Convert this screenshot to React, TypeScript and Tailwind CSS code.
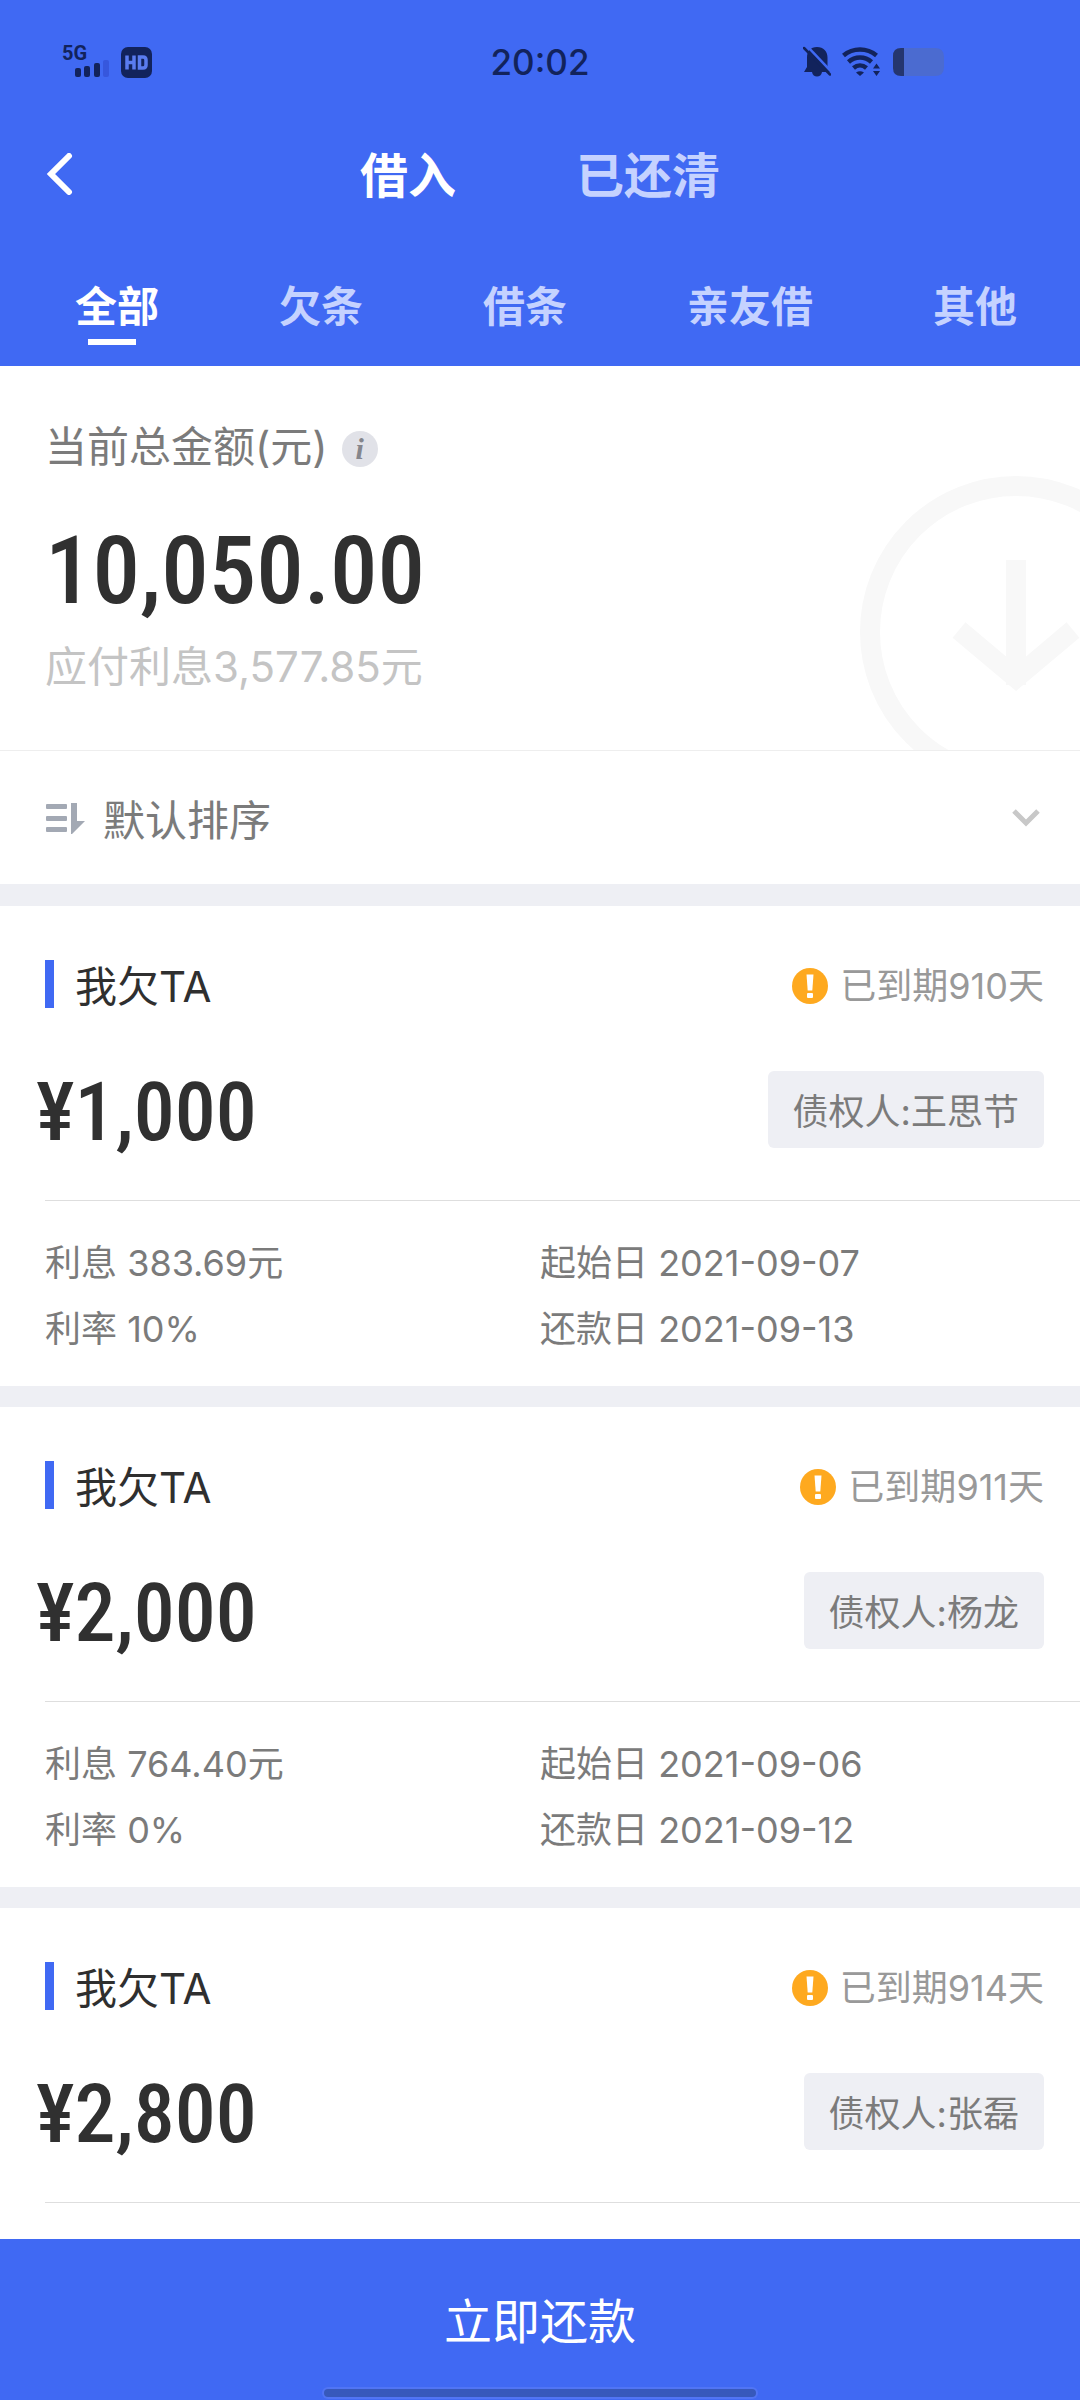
type Loan = {
  amount: string;
  overdueDays: number;
  creditor: string;
  interest?: string;
  rate?: string;
  start?: string;
  due?: string;
};

const LOANS: Loan[] = [
  {
    amount: "1,000",
    overdueDays: 910,
    creditor: "王思节",
    interest: "383.69元",
    rate: "10%",
    start: "2021-09-07",
    due: "2021-09-13",
  },
  {
    amount: "2,000",
    overdueDays: 911,
    creditor: "杨龙",
    interest: "764.40元",
    rate: "0%",
    start: "2021-09-06",
    due: "2021-09-12",
  },
  { amount: "2,800", overdueDays: 914, creditor: "张磊" },
];

const CATEGORIES = ["全部", "欠条", "借条", "亲友借", "其他"];

function SignalIcon() {
  return (
    <svg width="50" height="54" viewBox="0 -10 50 54" aria-hidden="true">
      <text x="0" y="15" fontSize="20" fontWeight="700" fill="#12235c" fontFamily="Roboto, sans-serif">
        5G
      </text>
      <g fill="#12235c">
        <rect x="13" y="23" width="6" height="9" rx="2" />
        <rect x="22" y="21" width="6" height="11" rx="2" />
        <rect x="32" y="18" width="6" height="14" rx="2" />
      </g>
      <rect x="41" y="15" width="6" height="17" rx="2" fill="#3657dd" />
    </svg>
  );
}

function HdIcon() {
  return (
    <svg width="31" height="31" viewBox="0 0 31 31" aria-hidden="true">
      <rect width="31" height="31" rx="7" fill="#12235c" />
      <path
        d="M6 8.500v14M13 8.500v14M6 15.500h7M18.500 10h3.500q3 0 3 3v5q0 3-3 3h-3.500z"
        fill="none"
        stroke="#5a7cf0"
        strokeWidth="3.500"
      />
    </svg>
  );
}

function BellOffIcon() {
  return (
    <svg width="28" height="32" viewBox="0 0 28 32" aria-hidden="true">
      <path
        d="M14 1c6.500 0 10.500 4.500 10.500 10.500V21l3 5H1l3-5v-9.500C4 5.500 7.500 1 14 1z"
        fill="#12235c"
      />
      <path d="M9 26h10c-.5 3-2.500 4.500-5 4.500S9.500 29 9 26z" fill="#12235c" />
      <path d="M4 0l25.500 27" stroke="#4069f3" strokeWidth="2.500" />
      <path d="M1 2l26 26.500" stroke="#12235c" strokeWidth="2.500" strokeLinecap="round" />
    </svg>
  );
}

function WifiIcon() {
  return (
    <svg width="40" height="30" viewBox="0 0 40 30" aria-hidden="true">
      <g fill="none" stroke="#12235c" strokeWidth="4.500">
        <path d="M1.500 8.500C11 .5 25 .5 34.500 8.500" />
        <path d="M6.500 15c6.500-6 16.500-6 23 0" />
        <path d="M11.500 21c4-3.500 9-3.500 13 0" />
      </g>
      <path d="M14 25.500q4-2.500 8 0L18 29z" fill="#12235c" />
      <path d="M31 21.500l3.500-5 3.500 5zM31 24h7l-3.500 5z" fill="#12235c" />
    </svg>
  );
}

function BatteryIcon() {
  return (
    <svg width="51" height="28" viewBox="0 0 51 28" aria-hidden="true">
      <path d="M11 0h31q9 0 9 9v10q0 9-9 9H11z" fill="#4b6bd0" />
      <path d="M11 0v28H8q-8 0-8-8V8q0-8 8-8z" fill="#25366f" />
    </svg>
  );
}

function SortIcon() {
  return (
    <svg width="40" height="34" viewBox="0 0 40 34" aria-hidden="true" fill="#a3a9b4">
      <rect x="1" y="3" width="21" height="5" rx="1" />
      <rect x="1" y="15" width="21" height="5" rx="1" />
      <rect x="1" y="26" width="21" height="5" rx="1" />
      <path d="M26 2h6v18h8L27 33h-1z" />
    </svg>
  );
}

function AlertIcon() {
  return (
    <svg width="36" height="36" viewBox="0 0 36 36" aria-hidden="true">
      <circle cx="18" cy="18" r="18" fill="#fea91f" />
      <path d="M14.500 6.500h7l-1.200 16h-4.600z" fill="#fff" />
      <rect x="15" y="25" width="6" height="5" rx="1" fill="#fff" />
    </svg>
  );
}

function Watermark() {
  return (
    <svg
      className="absolute right-0 bottom-0"
      width="220"
      height="275"
      viewBox="0 0 220 275"
      fill="none"
      stroke="#f8f8f8"
      strokeWidth="20"
      aria-hidden="true"
    >
      <circle cx="156" cy="157" r="146" />
      <path d="M156 85v125M99 155l57 48 57-48" />
    </svg>
  );
}

function LoanCard({ loan }: { loan: Loan }) {
  return (
    <article className="border-b-[21px] border-[#eeeff4] bg-white pt-[54px] last:border-b-0">
      <header className="flex h-12 items-center pr-9 pl-[45px]">
        <span className="h-12 w-[9px] bg-[#4069f3]" />
        <h2 className="ml-[21px] pt-1 text-[42px] text-[#2f2f2f]">我欠TA</h2>
        <p className="ml-auto flex items-center gap-3 pt-[3px] text-4xl text-[#999999]">
          <AlertIcon />
          已到期{loan.overdueDays}天
        </p>
      </header>
      <div className="mt-[63px] flex h-[77px] items-center justify-between px-9">
        <p className="pt-1 font-['Roboto_Condensed','Open_Sans_Condensed',sans-serif] text-[82px] leading-none font-medium text-[#303030]">
          ¥{loan.amount}
        </p>
        <button type="button" className="h-full rounded-md bg-[#eeeff4] px-[25px] pt-1 text-4xl text-[#7b7b7b]">
          债权人:{loan.creditor}
        </button>
      </div>
      <div className="mt-[52px] ml-[45px] border-t border-[#dedede]" />
      {loan.interest && (
        <div className="grid grid-cols-2 pt-[29px] pb-6 text-4xl leading-[66px] text-[#7b7b7b]">
          <p className="pl-[45px]">利息 {loan.interest}</p>
          <p>起始日 {loan.start}</p>
          <p className="pl-[45px]">利率 {loan.rate}</p>
          <p>还款日 {loan.due}</p>
        </div>
      )}
    </article>
  );
}

export default function App() {
  return (
    <div className="flex h-screen flex-col bg-white font-['Inter','Noto_Sans_CJK_SC',sans-serif]">
      <header className="shrink-0 bg-[#4069f3] text-white">
        <div className="grid h-[124px] grid-cols-[1fr_auto_1fr] items-center pr-[136px] pl-[62px]">
          <div className="flex items-center gap-[9px]">
            <SignalIcon />
            <HdIcon />
          </div>
          <time className="ml-[74px] text-[35px] font-medium text-[#12235c]">20:02</time>
          <div className="flex items-center justify-end gap-[11px]">
            <BellOffIcon />
            <WifiIcon />
            <BatteryIcon />
          </div>
        </div>
        <nav className="grid h-[104px] grid-cols-[1fr_auto_1fr] items-center">
          <button type="button" aria-label="返回" className="justify-self-start pb-1 pl-[46px]">
            <svg width="27" height="42" viewBox="0 0 27 42" fill="none" stroke="#fff" strokeWidth="6" aria-hidden="true">
              <path d="M23 3L5 21l18 18" strokeLinecap="round" />
            </svg>
          </button>
          <div className="flex gap-[120px] text-5xl font-bold">
            <button type="button">借入</button>
            <button type="button" className="text-[#c5d2ff]">
              已还清
            </button>
          </div>
        </nav>
        <nav className="flex h-[138px] items-start justify-between pt-[51px] pr-[63px] pl-[75px] text-[42px] leading-[56px] font-bold">
          {CATEGORIES.map((name, i) =>
            i === 0 ? (
              <button key={name} type="button" className="relative">
                {name}
                <span className="absolute -bottom-[10px] left-[13px] h-[6px] w-12 bg-white" />
              </button>
            ) : (
              <button key={name} type="button" className="text-[#c5d2ff]">
                {name}
              </button>
            ),
          )}
        </nav>
      </header>

      <main className="min-h-0 flex-1 overflow-hidden">
        <section className="relative border-b border-[#eeeeee] px-[45px] pt-[52px] pb-[54px]">
          <Watermark />
          <div className="flex items-center gap-[14px] text-[42px] leading-[58px] text-[#7b7b7b]">
            <h1>当前总金额(元)</h1>
            <button
              type="button"
              aria-label="说明"
              className="mt-1 flex size-9 items-center justify-center rounded-full bg-[#e1e2e8] font-['Liberation_Serif',serif] text-3xl leading-none font-bold text-[#85868c] italic"
            >
              i
            </button>
          </div>
          <p className="mt-10 font-['Roboto_Condensed','Open_Sans_Condensed',sans-serif] text-[95px] leading-[110px] font-medium text-[#303030]">
            10,050.00
          </p>
          <p className="mt-3 text-[42px] leading-[58px] text-[#c4c4c4]">应付利息3,577.85元</p>
        </section>
        <button
          type="button"
          className="flex h-[155px] w-full items-center border-b-[22px] border-[#eeeff4] pr-10 pl-[45px] text-[42px] text-[#7b7b7b]"
        >
          <SortIcon />
          <span className="ml-[18px] pt-[6px]">默认排序</span>
          <svg className="ml-auto" width="28" height="18" viewBox="0 0 28 18" fill="none" stroke="#c8c8c8" strokeWidth="5" aria-hidden="true">
            <path d="M2 2l12 12L26 2" />
          </svg>
        </button>
        {LOANS.map((loan) => (
          <LoanCard key={loan.amount} loan={loan} />
        ))}
      </main>

      <footer className="flex h-[161px] shrink-0 flex-col items-center bg-[#4069f3] pb-[3px]">
        <button type="button" className="w-full flex-1 pt-4 text-5xl text-white">
          立即还款
        </button>
        <span className="h-2 w-2/5 rounded-full bg-[#3759bb] ring-2 ring-[#5175f4]" />
      </footer>
    </div>
  );
}
